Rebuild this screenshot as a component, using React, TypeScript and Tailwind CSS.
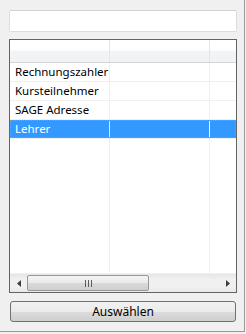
import React from "react";

const rows = ["Rechnungszahler", "Kursteilnehmer", "SAGE Adresse", "Lehrer"];

function Row({ label, selected }: { label: string; selected?: boolean }) {
  if (selected) {
    return (
      <div className="relative flex h-[19px] shrink-0 bg-[#3399ff] border-b border-[#f0f0f0] text-white">
        <div className="w-[100px] shrink-0 border-r border-[#d8e8fb] pl-[5px] leading-[18px]">{label}</div>
        <div className="w-[100px] shrink-0 border-r border-white" />
        <div className="flex-1" />
        <div className="pointer-events-none absolute left-0 right-0 top-0 bottom-0 border border-dotted border-[#d98a3a]" />
      </div>
    );
  }
  return (
    <div className="flex h-[19px] shrink-0 border-b border-[#f0f0f0] text-black">
      <div className="w-[100px] shrink-0 border-r border-[#f0f0f0] pl-[5px] leading-[18px] whitespace-nowrap">{label}</div>
      <div className="w-[100px] shrink-0 border-r border-[#f0f0f0]" />
      <div className="flex-1" />
    </div>
  );
}

export default function App() {
  return (
    <div
      className="w-[246px] h-[334px] bg-[#f0f0f0] overflow-hidden"
      style={{ fontFamily: '"Noto Sans", "Open Sans", sans-serif' }}
    >
      <div className="w-[245px] h-[332px] border-r border-b border-[#9a9a9a] flex flex-col pl-[9px] pr-[7px] pt-[10px]">
        {/* text box */}
        <div className="h-[22px] w-[228px] shrink-0 rounded-[2px] border border-[#dcdde3] border-t-[#d0d1d8] bg-white" />

        {/* grid */}
        <div className="mt-[7px] h-[254px] w-[228px] shrink-0 border border-[#646464] bg-white flex flex-col overflow-hidden text-[11.5px]">
          {/* header */}
          <div className="flex h-[23px] shrink-0 border-b border-[#d5d5d5] bg-[linear-gradient(to_bottom,#ffffff_0%,#ffffff_45%,#f3f4f6_50%,#f1f2f4_100%)]">
            <div className="w-[100px] shrink-0 border-r border-[#e3e4e6]" />
            <div className="w-[100px] shrink-0 border-r border-[#e3e4e6]" />
            <div className="flex-1" />
          </div>
          {/* rows */}
          <div className="flex-1 flex flex-col overflow-hidden">
            {rows.map((r, i) => (
              <Row key={r} label={r} selected={i === 3} />
            ))}
            <div className="flex flex-1 border-b border-[#f0f0f0]">
              <div className="w-[100px] shrink-0 border-r border-[#f0f0f0]" />
              <div className="w-[100px] shrink-0 border-r border-[#f0f0f0]" />
              <div className="flex-1" />
            </div>
          </div>
          {/* scrollbar */}
          <div className="h-[18px] shrink-0 flex items-stretch bg-[linear-gradient(to_bottom,#e6e6e6,#f0f0f0_30%,#f0f0f0_70%,#e8e8e8)]">
            <div className="w-[17px] shrink-0 flex items-center justify-center">
              <svg width="4" height="7" viewBox="0 0 4 7">
                <path d="M4 0 L0 3.5 L4 7 Z" fill="#3f3f3f" />
              </svg>
            </div>
            <div className="w-[122px] shrink-0 my-[1px] rounded-[2px] border border-[#979797] bg-[linear-gradient(to_bottom,#f3f3f3,#e9e9e9_50%,#d9d9d9_51%,#d0d0d0)] flex items-center justify-center">
              <svg width="7" height="7" viewBox="0 0 7 7">
                <rect x="0" y="0" width="1" height="7" fill="#5a5a5a" />
                <rect x="3" y="0" width="1" height="7" fill="#5a5a5a" />
                <rect x="6" y="0" width="1" height="7" fill="#5a5a5a" />
              </svg>
            </div>
            <div className="flex-1" />
            <div className="w-[17px] shrink-0 flex items-center justify-center">
              <svg width="4" height="7" viewBox="0 0 4 7">
                <path d="M0 0 L4 3.5 L0 7 Z" fill="#3f3f3f" />
              </svg>
            </div>
          </div>
        </div>

        {/* button */}
        <div className="mt-[8px] ml-[1px] h-[21px] w-[226px] shrink-0 rounded-[3px] border border-[#707070] bg-[linear-gradient(to_bottom,#f2f2f2,#ebebeb_50%,#dddddd_51%,#cfcfcf)] flex items-center justify-center text-[12px] text-black">
          Auswählen
        </div>
      </div>
    </div>
  );
}
